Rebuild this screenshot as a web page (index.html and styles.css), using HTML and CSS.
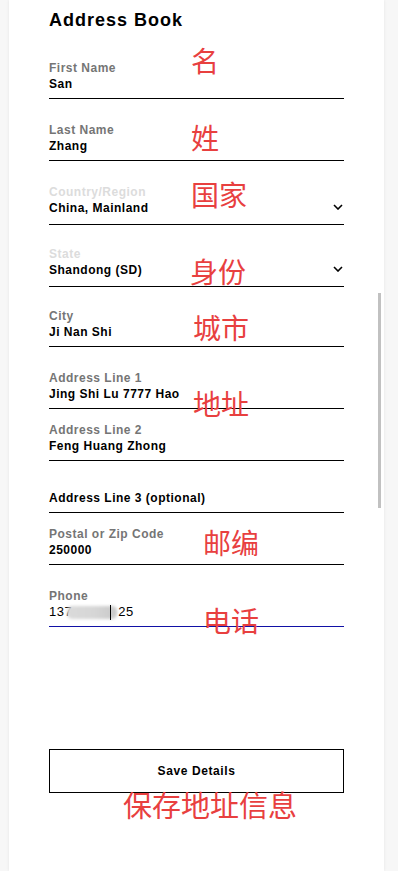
FILE: index.html
```html
<!DOCTYPE html>
<html>
  <head>
    <meta charset="UTF-8" />
    <title>Address Book</title>
    <link rel="stylesheet" href="styles.css">
  </head>

  <body>
    <div id="card">
      <h1>Address Book</h1>

      <div class="field">
        <div class="fieldLabel">First Name</div>
        <div class="fieldValue">San</div>
        <span class="note note-name">名</span>
      </div>

      <div class="field">
        <div class="fieldLabel">Last Name</div>
        <div class="fieldValue">Zhang</div>
        <span class="note note-surname">姓</span>
      </div>

      <div class="field field--select">
        <div class="fieldLabel fieldLabel--muted">Country/Region</div>
        <div class="fieldValue">
          <span>China, Mainland</span>
          <svg class="chevron" width="10" height="6" viewBox="0 0 10 6">
            <path d="M1 1 L5 5 L9 1" fill="none" stroke="#000" stroke-width="1.6" />
          </svg>
        </div>
        <span class="note note-country">国家</span>
      </div>

      <div class="field field--select">
        <div class="fieldLabel fieldLabel--muted">State</div>
        <div class="fieldValue">
          <span>Shandong (SD)</span>
          <svg class="chevron" width="10" height="6" viewBox="0 0 10 6">
            <path d="M1 1 L5 5 L9 1" fill="none" stroke="#000" stroke-width="1.6" />
          </svg>
        </div>
        <span class="note note-state">身份</span>
      </div>

      <div class="field">
        <div class="fieldLabel">City</div>
        <div class="fieldValue">Ji Nan Shi</div>
        <span class="note note-city">城市</span>
      </div>

      <div class="field">
        <div class="fieldLabel">Address Line 1</div>
        <div class="fieldValue">Jing Shi Lu 7777 Hao</div>
        <span class="note note-address">地址</span>
      </div>

      <div class="field field--compact">
        <div class="fieldLabel">Address Line 2</div>
        <div class="fieldValue">Feng Huang Zhong</div>
      </div>

      <div class="field field--compact">
        <div class="fieldLabel"></div>
        <div class="fieldValue">Address Line 3 (optional)</div>
      </div>

      <div class="field field--compact">
        <div class="fieldLabel">Postal or Zip Code</div>
        <div class="fieldValue">250000</div>
        <span class="note note-postal">邮编</span>
      </div>

      <div class="field field--focus">
        <div class="fieldLabel">Phone</div>
        <div class="fieldValue">137<span class="masked"><span class="blurred"></span><span class="caret"></span></span>25</div>
        <span class="note note-phone">电话</span>
      </div>

      <div class="saveWrap">
        <button id="saveButton">Save Details</button>
        <span class="note note-save">保存地址信息</span>
      </div>

      <div class="scrollThumb"></div>
    </div>
  </body>
</html>
```

FILE: styles.css
```css
html,
body {
  margin: 0;
  background-color: #f7f7f7;
}

body {
  font-family: "Liberation Sans", Arial, sans-serif;
  color: #000;
}

#card {
  position: relative;
  box-sizing: border-box;
  width: 375px;
  min-height: 871px;
  margin-left: 9px;
  padding: 9px 40px 40px;
  background-color: #fff;
  box-shadow: 0 0 3px rgba(0, 0, 0, 0.08);
}

h1 {
  margin: 0 0 28px;
  font-size: 18px;
  line-height: 22px;
  font-weight: bold;
  letter-spacing: 1px;
}

.field {
  position: relative;
  margin-top: 22px;
  padding-top: 1px;
  padding-bottom: 6px;
  border-bottom: 1px solid #000;
}

h1 + .field {
  margin-top: 0;
}

.field--select {
  padding-bottom: 8px;
}

.field--select + .field {
  margin-top: 20px;
}

.field--compact {
  margin-top: 12px;
}

.field--focus {
  border-bottom-color: #1111a6;
}

.fieldLabel {
  height: 16px;
  font-size: 12px;
  line-height: 16px;
  font-weight: bold;
  letter-spacing: 0.5px;
  color: #757575;
}

.fieldLabel--muted {
  color: #dcdcdc;
}

.fieldValue {
  display: flex;
  justify-content: space-between;
  align-items: center;
  height: 16px;
  font-size: 12px;
  line-height: 16px;
  font-weight: bold;
  letter-spacing: 0.5px;
}

.field--focus .fieldValue {
  justify-content: flex-start;
  font-weight: normal;
  font-size: 13px;
}

.chevron {
  margin-right: 1px;
  margin-top: -3px;
}

.masked {
  position: relative;
  display: inline-block;
  width: 50px;
  height: 13px;
  margin-left: -5px;
  margin-right: 1px;
}

.blurred {
  display: block;
  width: 100%;
  height: 100%;
  border-radius: 5px;
  background: linear-gradient(to right, #dadada, #d6d6d6 55%, #c8c8c8);
  filter: blur(1.5px);
}

.caret {
  position: absolute;
  left: 43px;
  top: -1px;
  width: 1px;
  height: 15px;
  background-color: #000;
}

.note {
  position: absolute;
  font-family: "Noto Sans CJK SC", sans-serif;
  font-size: 28px;
  line-height: 32px;
  color: #e8403f;
  white-space: nowrap;
}

.note-name {
  top: -15px;
  left: 142px;
}

.note-surname {
  top: 0;
  left: 142px;
}

.note-country {
  top: -5px;
  left: 142px;
}

.note-state {
  top: 10px;
  left: 141px;
}

.note-city {
  top: 4px;
  left: 144px;
}

.note-address {
  top: 18px;
  left: 144px;
}

.note-postal {
  top: 1px;
  left: 154px;
}

.note-phone {
  top: 17px;
  left: 154px;
}

.saveWrap {
  position: relative;
  margin-top: 122px;
}

#saveButton {
  display: block;
  box-sizing: border-box;
  width: 100%;
  height: 44px;
  padding: 0;
  border: 1px solid #000;
  background-color: #fff;
  font-family: "Liberation Sans", Arial, sans-serif;
  font-size: 12px;
  font-weight: bold;
  letter-spacing: 0.6px;
  color: #000;
}

.note-save {
  top: 39px;
  left: 74px;
  font-size: 29px;
}

.scrollThumb {
  position: absolute;
  top: 293px;
  right: 3px;
  width: 3px;
  height: 215px;
  background-color: #c1c1c1;
}
```
